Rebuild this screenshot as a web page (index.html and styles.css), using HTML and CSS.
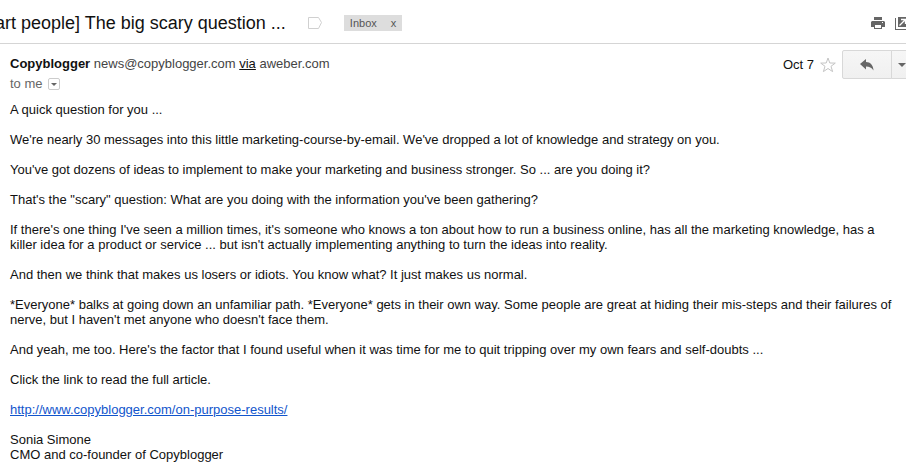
FILE: index.html
```html
<!DOCTYPE html>
<html lang="en">
<head>
<meta charset="utf-8">
<title>The big scary question ...</title>
<link rel="stylesheet" href="styles.css">
</head>
<body>
<header class="subject-bar">
  <h1 class="subject">art people] The big scary question ...</h1>
  <svg class="tag" width="14" height="12" viewBox="0 0 14 12" aria-hidden="true"><path d="M.5 .5H10.5L13.5 5.5L10.5 11.5H.5Z" fill="none" stroke="#d0d0d0"/></svg>
  <div class="label"><span>Inbox</span><button class="label-remove" type="button">x</button></div>
  <div class="tools">
    <button class="icon-button" type="button" aria-label="Print all">
      <svg width="14" height="13" viewBox="0 0 14 13"><path fill="#666" d="M3 0H11V3H3ZM1 4H13L14 5V10H11V12H3V10H0V5Z"/><path fill="#fff" d="M4 8H10V11H4ZM11 5H12V6H11Z"/></svg>
    </button>
    <button class="icon-button" type="button" aria-label="In new window">
      <svg width="14" height="13" viewBox="0 0 14 13"><path fill="#666" d="M0 1H1V12H13V13H0ZM3 0H14V10H3Z"/><path d="M4.500 8.500L10 3M6 2.500H10.500V7" fill="none" stroke="#fff" stroke-width="1.300"/></svg>
    </button>
  </div>
</header>
<main class="message">
  <div class="sender-row">
    <div class="sender">
      <div class="from"><b>Copyblogger</b> news@copyblogger.com <a class="via" href="#">via</a> aweber.com</div>
      <div class="to">to me
        <button class="details" type="button" aria-label="Show details"><svg width="6" height="3" viewBox="0 0 6 3"><path fill="#666" d="M0 0H6L3 3Z"/></svg></button>
      </div>
    </div>
    <div class="actions">
      <time class="date">Oct 7</time>
      <button class="icon-button star" type="button" aria-label="Star">
        <svg width="16" height="16" viewBox="0 0 16 16"><path d="M8 1L9.800 6L15.300 6.100L11 9.300L12.600 14.600L8 11.500L3.400 14.600L5 9.300L.7 6.100L6.200 6Z" fill="#fff" stroke="#c4c4c4"/></svg>
      </button>
      <button class="reply" type="button" aria-label="Reply">
        <svg width="14" height="12" viewBox="0 0 14 12"><path fill="#666" d="M0 5L6 0V3C10.500 3 13 6 13.500 11.500C11.500 8.500 9.500 7.500 6 7.500V10.500Z"/></svg>
      </button>
      <button class="more" type="button" aria-label="More">
        <svg width="8" height="4" viewBox="0 0 8 4"><path fill="#666" d="M0 0H8L4 4Z"/></svg>
      </button>
    </div>
  </div>
  <article class="body">
    <p>A quick question for you ...</p>
    <p>We're nearly 30 messages into this little marketing-course-by-email. We've dropped a lot of knowledge and strategy on you.</p>
    <p>You've got dozens of ideas to implement to make your marketing and business stronger. So ... are you doing it?</p>
    <p>That's the "scary" question: What are you doing with the information you've been gathering?</p>
    <p>If there's one thing I've seen a million times, it's someone who knows a ton about how to run a business online, has all the marketing knowledge, has a killer idea for a product or service ... but isn't actually implementing anything to turn the ideas into reality.</p>
    <p>And then we think that makes us losers or idiots. You know what? It just makes us normal.</p>
    <p>*Everyone* balks at going down an unfamiliar path. *Everyone* gets in their own way. Some people are great at hiding their mis-steps and their failures of nerve, but I haven't met anyone who doesn't face them.</p>
    <p>And yeah, me too. Here's the factor that I found useful when it was time for me to quit tripping over my own fears and self-doubts ...</p>
    <p>Click the link to read the full article.</p>
    <p><a class="link" href="http://www.copyblogger.com/on-purpose-results/">http://www.copyblogger.com/on-purpose-results/</a></p>
    <p>Sonia Simone<br>CMO and co-founder of Copyblogger</p>
  </article>
</main>
</body>
</html>
```
FILE: styles.css
```css
* { box-sizing: border-box; }
body {
  margin: 0;
  overflow-x: hidden;
  background: #fff;
  color: #111;
  font: 13px/15px "Liberation Sans", Arial, sans-serif;
}
button {
  margin: 0;
  padding: 0;
  border: 0;
  background: none;
  color: inherit;
  font: inherit;
}
svg { display: block; flex: none; }
.subject-bar {
  display: flex;
  align-items: center;
  height: 44px;
  padding-top: 3px;
  border-bottom: 1px solid #d5d5d5;
}
.subject {
  margin: 0 22px 0 -5px;
  font-size: 18px;
  font-weight: 400;
  line-height: 24px;
  white-space: nowrap;
}
.tag { margin-right: 22px; }
.label {
  display: flex;
  gap: 14px;
  padding: 0 6px;
  background: #ddd;
  color: #555;
  font-size: 11px;
  line-height: 16px;
}
.tools {
  display: flex;
  gap: 10px;
  margin: 0 -3px 0 auto;
}
.message { padding: 6px 0 0 10px; }
.sender-row {
  display: flex;
  justify-content: space-between;
  align-items: flex-start;
}
.sender { padding-top: 4px; line-height: 20px; }
.from { color: #444; }
.from b { color: #111; }
.via { color: #111; }
.to {
  display: flex;
  align-items: center;
  gap: 5px;
  color: #666;
}
.details {
  display: grid;
  place-items: center;
  width: 12px;
  height: 12px;
  border: 1px solid #ccc;
  border-radius: 2px;
}
.actions {
  display: flex;
  align-items: center;
  margin-right: -6px;
}
.date { margin-right: 6px; }
.star { margin-right: 6px; }
.reply, .more {
  display: grid;
  place-items: center;
  height: 29px;
  border: 1px solid #d8d8d8;
  background: linear-gradient(#f6f6f6, #f0f0f0);
}
.reply { width: 50px; border-radius: 2px 0 0 2px; }
.more { width: 21px; margin-left: -1px; border-radius: 0 2px 2px 0; }
.body { padding: 8px 8px 0 0; }
.body p { margin: 0 0 15px; }
.body p:last-child { margin-bottom: 0; }
.link { color: #15c; }
```
